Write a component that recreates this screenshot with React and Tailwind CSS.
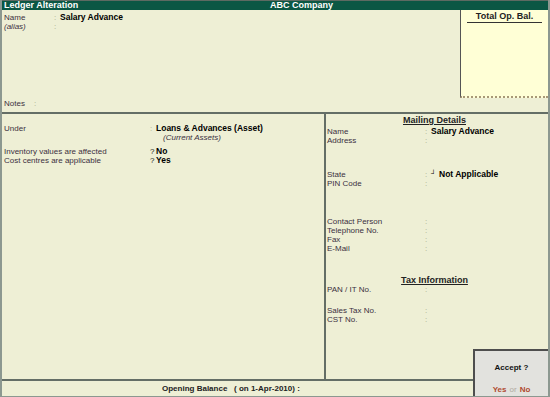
import React from 'react';

const Row = ({ label, sep = ':', value, italic, bold = true, lw = 'w-[146px]' }) => (
  <div className="flex h-[9px] items-center leading-[9px]">
    <span className={`${lw} shrink-0 text-[#3b2f3f] ${italic ? 'italic' : ''}`}>{label}</span>
    <span className={`w-[6px] shrink-0 ${sep === '?' ? 'text-[#222]' : 'text-[#a8a888]'}`}>{sep}</span>
    {value && <span className={`text-black text-[8.5px] ${bold ? 'font-bold' : ''}`}>{value}</span>}
  </div>
);

const Gap = ({ h }) => <div style={{ height: h }} />;

const App = () => {
  return (
    <div
      className="relative w-[550px] h-[397px] overflow-hidden bg-[#eeefd5] text-[8px] flex flex-col border-x-2 border-b border-[#8c9890]"
      style={{ fontFamily: '"Liberation Sans", Arial, sans-serif' }}
    >
      {/* Title bar */}
      <div className="h-[10px] shrink-0 bg-[#0b5744] border-t border-[#5d6a62] flex items-center text-white font-bold text-[9px] leading-[9px]">
        <span className="pl-[2px] w-[268px]">Ledger Alteration</span>
        <span>ABC Company</span>
      </div>

      {/* Top section */}
      <div className="h-[102px] shrink-0 flex">
        <div className="flex-1 flex flex-col justify-between pt-[3px] pb-[4px] pl-[2px]">
          <div>
            <div className="flex h-[9px] items-center">
              <span className="w-[50px] text-[#3b2f3f]">Name</span>
              <span className="w-[6px] text-[#a8a888]">:</span>
              <span className="text-[8.5px] font-bold text-black">Salary Advance</span>
            </div>
            <div className="flex h-[9px] items-center">
              <span className="w-[50px] italic text-[#3b2f3f]">(alias)</span>
              <span className="w-[6px] text-[#a8a888]">:</span>
            </div>
          </div>
          <div className="flex h-[9px] items-center">
            <span className="w-[30px] text-[#3b2f3f]">Notes</span>
            <span className="text-[#a8a888]">:</span>
          </div>
        </div>
        <div className="w-[88px] h-[88px] bg-[#ffffd6] border-l border-l-[#555] border-b-2 border-b-[#a89878] [border-bottom-style:dotted] flex flex-col items-center pt-[1px]">
          <span className="font-bold text-[9px] text-[#222] leading-[10px]">Total Op. Bal.</span>
          <div className="w-[75px] h-px bg-[#333] mt-[1px]" />
        </div>
      </div>

      <div className="h-[2px] shrink-0 bg-[#646e66]" />

      {/* Middle section */}
      <div className="flex-1 flex min-h-0">
        <div className="w-[322px] shrink-0 pl-[2px] pt-[10px]">
          <Row label="Under" value="Loans & Advances (Asset)" />
          <div className="h-[9px] leading-[9px] pl-[159px] italic text-[#3b2f3f]">(Current Assets)</div>
          <Gap h={5} />
          <Row label="Inventory values are affected" sep="?" value="No" />
          <Row label="Cost centres are applicable" sep="?" value="Yes" />
        </div>
        <div className="w-[2px] shrink-0 bg-[#646e66]" />
        <div className="flex-1 pl-[1px] pt-[1px]">
          <div className="flex justify-center h-[10px] leading-[10px] pr-[6px]">
            <span className="font-bold text-[9px] text-[#222] underline underline-offset-[1px]">Mailing Details</span>
          </div>
          <Gap h={2} />
          <Row label="Name" value="Salary Advance" lw="w-[98px]" />
          <Row label="Address" lw="w-[98px]" />
          <Gap h={25} />
          <div className="flex h-[9px] items-center leading-[9px]">
            <span className="w-[98px] text-[#3b2f3f]">State</span>
            <span className="w-[6px] text-[#a8a888]">:</span>
            <span className="w-[8px] text-black text-[7px] -mt-[3px]">┘</span>
            <span className="text-black text-[8.5px] font-bold">Not Applicable</span>
          </div>
          <Row label="PIN Code" lw="w-[98px]" />
          <Gap h={29} />
          <Row label="Contact Person" lw="w-[98px]" />
          <Row label="Telephone No." lw="w-[98px]" />
          <Row label="Fax" lw="w-[98px]" />
          <Row label="E-Mail" lw="w-[98px]" />
          <Gap h={22} />
          <div className="flex justify-center h-[10px] leading-[10px] pr-[6px]">
            <span className="font-bold text-[9px] text-[#222] underline underline-offset-[1px]">Tax Information</span>
          </div>
          <Row label="PAN / IT No." lw="w-[98px]" />
          <Gap h={12} />
          <Row label="Sales Tax No." lw="w-[98px]" />
          <Row label="CST No." lw="w-[98px]" />
        </div>
      </div>

      <div className="h-[2px] shrink-0 bg-[#646e66]" />

      {/* Footer */}
      <div className="h-[15px] shrink-0 flex items-center pl-[160px] font-bold text-[#222]">
        <span>Opening Balance&nbsp;&nbsp;&nbsp;( on 1-Apr-2010) :</span>
      </div>

      {/* Accept popup */}
      <div className="absolute right-0 bottom-0 w-[75px] h-[47px] bg-[#e2e2de] border-l-2 border-t-2 border-[#4e4e4e] flex flex-col items-center">
        <span className="mt-[12px] font-bold text-[#111] text-[8px] leading-[10px]">Accept ?</span>
        <div className="mt-[12px] flex items-center gap-[3px] text-[8px] leading-[10px]">
          <span className="font-bold text-[#b04a30]">Yes</span>
          <span className="text-[#b0aaa0]">or</span>
          <span className="font-bold text-[#b04a30]">No</span>
        </div>
      </div>
    </div>
  );
};

export default App;
